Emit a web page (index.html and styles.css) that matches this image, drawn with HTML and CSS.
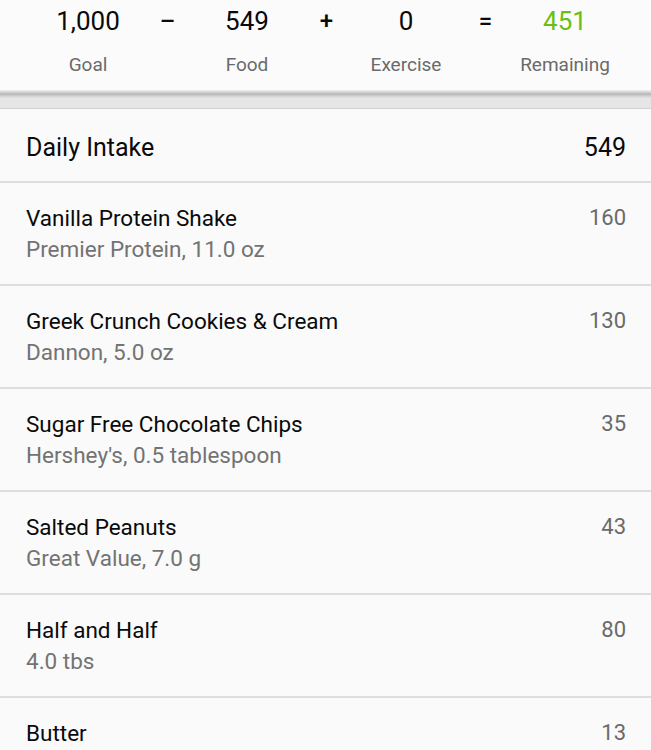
FILE: index.html
```html
<!DOCTYPE html>
<html>
<head>
<meta charset="utf-8">
<link rel="stylesheet" href="styles.css">
</head>
<body>
<div class="summary">
  <div class="eq">
    <div class="cell"><div class="num">1,000</div><div class="lbl">Goal</div></div>
    <div class="op">&ndash;</div>
    <div class="cell"><div class="num">549</div><div class="lbl">Food</div></div>
    <div class="op">+</div>
    <div class="cell"><div class="num">0</div><div class="lbl">Exercise</div></div>
    <div class="op">=</div>
    <div class="cell"><div class="num green">451</div><div class="lbl">Remaining</div></div>
  </div>
</div>
<div class="band"></div>
<div class="card">
  <div class="head"><span>Daily Intake</span><span>549</span></div>
  <div class="item"><div class="info"><div class="name">Vanilla Protein Shake</div><div class="sub">Premier Protein, 11.0 oz</div></div><div class="cal">160</div></div>
  <div class="item"><div class="info"><div class="name">Greek Crunch Cookies &amp; Cream</div><div class="sub">Dannon, 5.0 oz</div></div><div class="cal">130</div></div>
  <div class="item"><div class="info"><div class="name">Sugar Free Chocolate Chips</div><div class="sub">Hershey's, 0.5 tablespoon</div></div><div class="cal">35</div></div>
  <div class="item"><div class="info"><div class="name">Salted Peanuts</div><div class="sub">Great Value, 7.0 g</div></div><div class="cal">43</div></div>
  <div class="item"><div class="info"><div class="name">Half and Half</div><div class="sub">4.0 tbs</div></div><div class="cal">80</div></div>
  <div class="item"><div class="info"><div class="name">Butter</div><div class="sub">&nbsp;</div></div><div class="cal">13</div></div>
</div>
</body>
</html>
```
FILE: styles.css
```css
html, body {
  margin: 0;
  padding: 0;
  background: #fafafa;
  font-family: Roboto, "Noto Sans", sans-serif;
  overflow: hidden;
}
.summary {
  background: #fbfbfb;
  height: 90px;
}
.eq {
  display: grid;
  grid-template-columns: 110px 49px 110px 49px 110px 49px 110px;
  padding-left: 33px;
  padding-top: 4px;
}
.cell {
  display: flex;
  flex-direction: column;
  align-items: center;
}
.num {
  font-size: 26px;
  line-height: 34px;
  color: #0a0a0a;
}
.num.green { color: #6cbf12; }
.lbl {
  font-size: 19px;
  line-height: 24px;
  margin-top: 15px;
  color: #6a6a6a;
}
.op {
  text-align: center;
  font-size: 24px;
  font-weight: 500;
  line-height: 34px;
  color: #0a0a0a;
}
.band {
  height: 20px;
  background: linear-gradient(#f3f3f3 0px, #d6d6d6 2px, #b8b8b8 4px, #cfcfcf 6px, #e6e6e6 8px, #e6e6e6 18px, #d2d2d2 18px, #d2d2d2 19px, #fafafa 19px);
}
.card {
  background: #fafafa;
}
.head {
  display: flex;
  justify-content: space-between;
  align-items: center;
  height: 73px;
  padding: 4px 25px 0 26px;
  box-sizing: border-box;
  font-size: 25px;
  color: #0a0a0a;
  border-bottom: 2px solid #dedede;
}
.item {
  display: flex;
  justify-content: space-between;
  height: 101px;
  padding: 0 25px 0 26px;
  border-bottom: 2px solid #dedede;
}
.info { padding-top: 20px; }
.name {
  font-size: 22.5px;
  line-height: 30px;
  color: #0a0a0a;
}
.sub {
  font-size: 22.5px;
  line-height: 30px;
  margin-top: 1px;
  color: #737373;
}
.cal {
  padding-top: 20px;
  font-size: 22px;
  line-height: 30px;
  color: #6a6a6a;
}
```
